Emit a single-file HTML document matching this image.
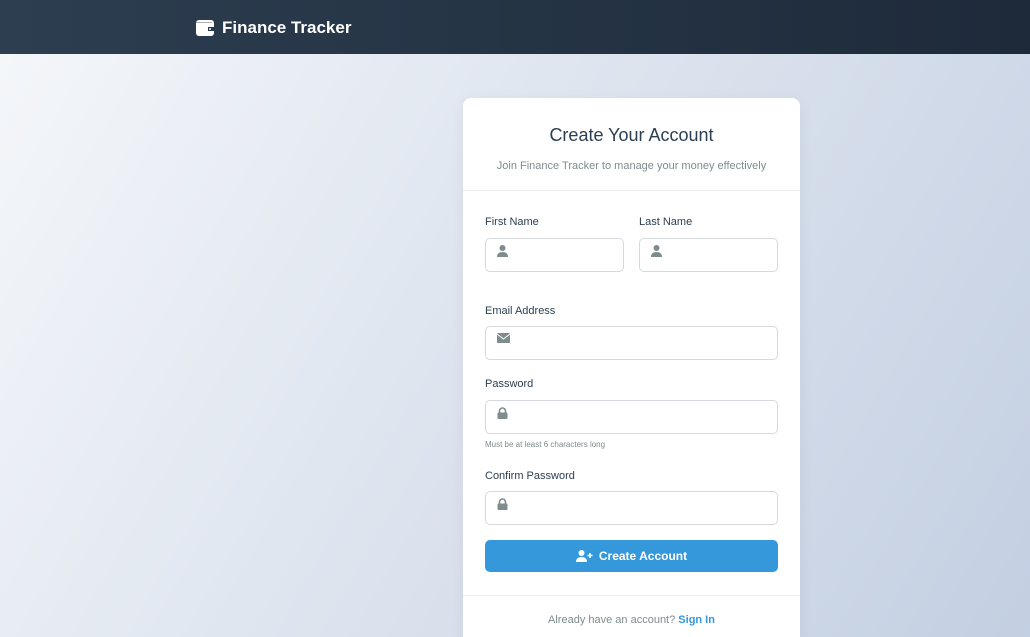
<!DOCTYPE html>
<html style="width:1030px;height:637px;overflow:hidden"><head><style>
*{box-sizing:border-box;margin:0;padding:0}
body{width:1030px;height:637px;overflow:hidden;font-family:"Liberation Sans",sans-serif;background:linear-gradient(120deg,#f5f7fa 0%,#c3cfe2 100%);position:relative}
.hdr{position:absolute;left:0;top:0;width:1030px;height:54px;background:linear-gradient(90deg,#2c3e50,#1e2a3a);}
.logo{position:absolute;left:196px;top:18px;color:#fff;font-weight:bold;font-size:17px;display:flex;align-items:center;gap:8px}
.card{position:absolute;left:463px;top:98px;width:337px;height:539px;background:#fff;border-radius:8px 8px 0 0;box-shadow:0 4px 16px rgba(0,0,0,.06)}
.a{position:absolute}
.t{left:0;width:337px;text-align:center}
.lbl{font-size:11px;color:#2c3e50}
.in{border:1px solid #d5d9de;border-radius:5px;height:34px}
.ic{position:absolute;left:11px;top:6px}
.hr{left:0;width:337px;height:1px;background:#eceef0}
</style></head><body>
<div class="hdr"><div class="logo"><svg width="18" height="16" viewBox="0 0 18 16"><rect x="0" y="0" width="18" height="16" rx="3" fill="#fff"/><rect x="12" y="7" width="6" height="4" fill="#2a3a4c"/><circle cx="14" cy="9" r="1" fill="#fff"/><rect x="0" y="2" width="16" height="1" fill="#2a3a4c" opacity=".4"/></svg>Finance Tracker</div></div>
<div class="card">
<div class="a t" style="top:27px;font-size:18px;color:#2c3e50">Create Your Account</div>
<div class="a t" style="top:62px;font-size:11px;color:#7f8c8d">Join Finance Tracker to manage your money effectively</div>
<div class="a hr" style="top:92px"></div>
<div class="a lbl" style="left:22px;top:118px">First Name</div>
<div class="a lbl" style="left:176px;top:118px">Last Name</div>
<div class="a in" style="left:22px;top:140px;width:139px"><svg class="ic" width="11" height="12" viewBox="0 0 11 12"><circle cx="5.5" cy="3" r="3" fill="#7f8c8d"/><path d="M0 12 Q0 7 5.5 7 Q11 7 11 12Z" fill="#7f8c8d"/></svg></div>
<div class="a in" style="left:176px;top:140px;width:139px"><svg class="ic" width="11" height="12" viewBox="0 0 11 12"><circle cx="5.5" cy="3" r="3" fill="#7f8c8d"/><path d="M0 12 Q0 7 5.5 7 Q11 7 11 12Z" fill="#7f8c8d"/></svg></div>
<div class="a lbl" style="left:22px;top:207px">Email Address</div>
<div class="a in" style="left:22px;top:228px;width:293px"><svg class="ic" width="13" height="10" viewBox="0 0 13 10" style="top:6px"><rect width="13" height="10" rx="1" fill="#7f8c8d"/><path d="M0 1 L6.5 6 L13 1" stroke="#fff" fill="none" stroke-width="1"/></svg></div>
<div class="a lbl" style="left:22px;top:280px">Password</div>
<div class="a in" style="left:22px;top:302px;width:293px"><svg class="ic" width="11" height="12" viewBox="0 0 11 12"><path d="M2.5 6V4a3 3 0 0 1 6 0v2" stroke="#7f8c8d" stroke-width="1.6" fill="none"/><rect x="0.5" y="5.5" width="10" height="6.5" rx="1" fill="#7f8c8d"/></svg></div>
<div class="a" style="left:22px;top:342px;font-size:8px;color:#7f8c8d">Must be at least 6 characters long</div>
<div class="a lbl" style="left:22px;top:372px">Confirm Password</div>
<div class="a in" style="left:22px;top:393px;width:293px"><svg class="ic" width="11" height="12" viewBox="0 0 11 12"><path d="M2.5 6V4a3 3 0 0 1 6 0v2" stroke="#7f8c8d" stroke-width="1.6" fill="none"/><rect x="0.5" y="5.5" width="10" height="6.5" rx="1" fill="#7f8c8d"/></svg></div>
<div class="a" style="left:22px;top:442px;width:293px;height:32px;background:#3498db;border-radius:5px;color:#fff;font-weight:bold;font-size:12px;display:flex;align-items:center;justify-content:center;gap:6px"><svg width="17" height="12" viewBox="0 0 17 12"><circle cx="5.5" cy="3" r="3" fill="#fff"/><path d="M0 12 Q0 7 5.5 7 Q11 7 11 12Z" fill="#fff"/><path d="M14 3v5M11.5 5.5h5" stroke="#fff" stroke-width="1.6"/></svg>Create Account</div>
<div class="a hr" style="top:497px"></div>
<div class="a t" style="top:516px;font-size:11px;color:#7f8c8d">Already have an account? <span style="color:#3498db;font-weight:bold">Sign In</span></div>
</div>
</body></html>
